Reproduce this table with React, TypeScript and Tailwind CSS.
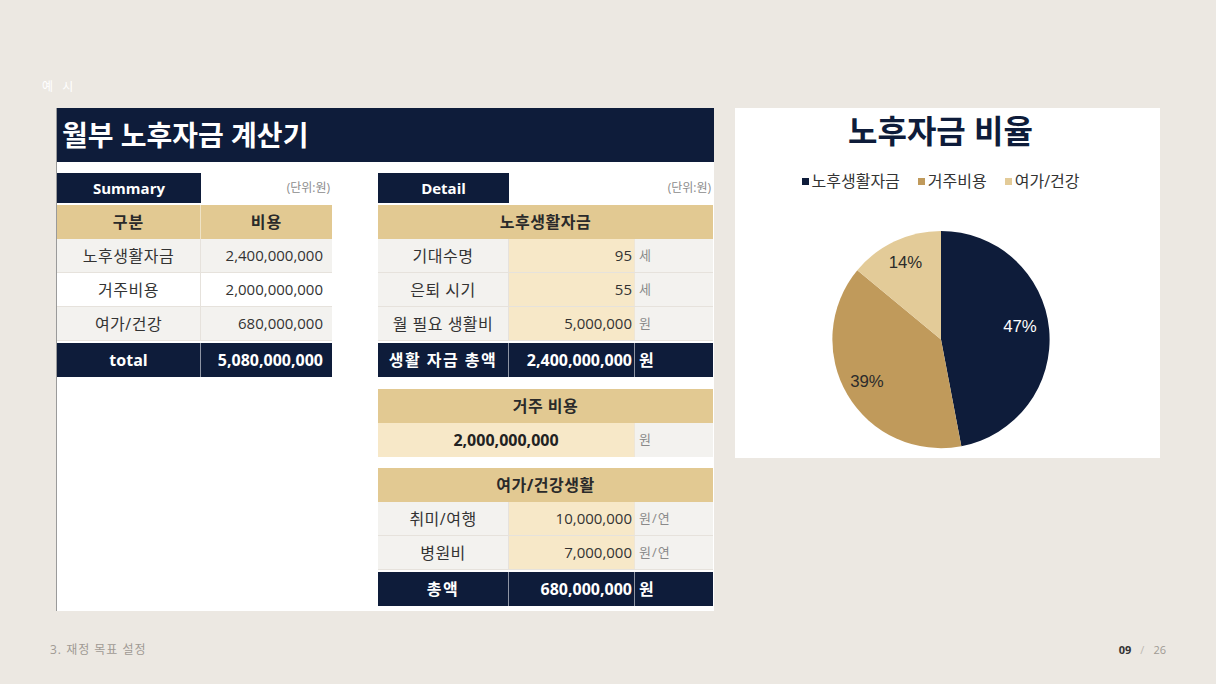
import React from "react"

const FONT = "font-['Open_Sans','Noto_Sans_CJK_KR',sans-serif]"

const summaryRows = [
  { label: "노후생활자금", value: "2,400,000,000", bg: "bg-[#f3f2ef]" },
  { label: "거주비용", value: "2,000,000,000", bg: "bg-white" },
  { label: "여가/건강", value: "680,000,000", bg: "bg-[#f3f2ef]" },
]

const lifeRows = [
  { label: "기대수명", value: "95", unit: "세" },
  { label: "은퇴 시기", value: "55", unit: "세" },
  { label: "월 필요 생활비", value: "5,000,000", unit: "원" },
]

const leisureRows = [
  { label: "취미/여행", value: "10,000,000", unit: "원/연" },
  { label: "병원비", value: "7,000,000", unit: "원/연" },
]

function TableTab({ label, width }: { label: string; width: string }) {
  return (
    <div className="flex h-[30px]">
      <div className={`${width} bg-[#0e1c3a] text-white font-bold text-[15px] flex items-center justify-center`}>
        {label}
      </div>
      <div className="flex-1 flex items-center justify-end pr-[2px] text-[12px] text-[#8c8c8c]">(단위:원)</div>
    </div>
  )
}

function TanHeader({ children, className = "" }: { children: React.ReactNode; className?: string }) {
  return (
    <div className={`h-[34px] bg-[#e2c992] flex items-center justify-center font-bold text-[16px] tracking-[0.5px] text-[#2a2a2a] ${className}`}>
      {children}
    </div>
  )
}

function DetailRow({ label, value, unit }: { label: string; value: string; unit: string }) {
  return (
    <div className="flex h-[34px] border-b border-[#e6e2dc] text-[15px] text-[#333]">
      <div className="w-[131px] bg-[#f3f2ef] border-r border-[#e6e2dc] flex items-center justify-center text-[16px] tracking-[0.5px]">{label}</div>
      <div className="w-[126px] bg-[#f7e8c8] border-r border-[#efe6d6] flex items-center justify-end pr-[2px]">{value}</div>
      <div className="flex-1 bg-[#f3f2ef] flex items-center pl-[4px] text-[13px] tracking-[1px] text-[#8a8a8a]">{unit}</div>
    </div>
  )
}

function NavyRow({ label, value }: { label: string; value: string }) {
  return (
    <div className="mt-[2px] flex h-[34px] bg-[#0e1c3a] text-white font-bold text-[16px]">
      <div className="w-[131px] border-r border-[#8e95a4] flex items-center justify-center tracking-[1.5px]">{label}</div>
      <div className="w-[126px] border-r border-[#8e95a4] flex items-center justify-end pr-[2px]">{value}</div>
      <div className="flex-1 flex items-center pl-[4px]">원</div>
    </div>
  )
}

function PieChart() {
  return (
    <svg width="240" height="240" viewBox="0 0 240 240" className="mt-[30px]">
      <path d="M120,120 L120,10 A110,110 0 0 1 140.61,228.05 Z" fill="#0e1c3a" />
      <path d="M120,120 L140.61,228.05 A110,110 0 0 1 35.24,49.88 Z" fill="#c09a5b" />
      <path d="M120,120 L35.24,49.88 A110,110 0 0 1 120,10 Z" fill="#e3cb98" />
      <g fontFamily="'Liberation Sans', Arial, sans-serif" fontSize="17" textAnchor="middle" dominantBaseline="central">
        <text x="200" y="107" fill="#ffffff">47%</text>
        <text x="45" y="163" fill="#2b2b2b">39%</text>
        <text x="84" y="42" fill="#2b2b2b">14%</text>
      </g>
    </svg>
  )
}

export default function App() {
  return (
    <div className={`w-[1216px] h-[684px] bg-[#ece8e2] flex flex-col ${FONT}`}>
      <div className="pt-[80px] pl-[42px] h-[94px] text-[12px] leading-[14px] tracking-[3px] text-white">예 시</div>

      <div className="mt-[14px] flex pl-[56px] gap-[21px]">
        {/* calculator panel */}
        <div className="w-[658px] h-[503px] bg-white border-l border-[#9a9a9a] flex flex-col">
          <div className="h-[54px] bg-[#0e1c3a] flex items-center pl-[5px] text-white font-bold text-[28px]">
            월부 노후자금 계산기
          </div>

          <div className="pt-[11px] flex gap-[46px]">
            {/* Summary */}
            <div className="w-[275px] flex flex-col">
              <TableTab label="Summary" width="w-[144px]" />
              <div className="mt-[2px] flex h-[34px] bg-[#e2c992] font-bold text-[16px] tracking-[1px] text-[#2a2a2a]">
                <div className="w-[144px] border-r border-[#efe3c6] flex items-center justify-center">구분</div>
                <div className="flex-1 flex items-center justify-center">비용</div>
              </div>
              {summaryRows.map((r) => (
                <div key={r.label} className={`flex h-[34px] border-b border-[#e6e2dc] text-[15px] text-[#333] ${r.bg}`}>
                  <div className="w-[144px] border-r border-[#e6e2dc] flex items-center justify-center text-[16px] tracking-[0.5px]">{r.label}</div>
                  <div className="flex-1 flex items-center justify-end pr-[9px]">{r.value}</div>
                </div>
              ))}
              <div className="mt-[2px] flex h-[34px] bg-[#0e1c3a] text-white font-bold text-[16px]">
                <div className="w-[144px] border-r border-[#8e95a4] flex items-center justify-center">total</div>
                <div className="flex-1 flex items-center justify-end pr-[9px]">5,080,000,000</div>
              </div>
            </div>

            {/* Detail */}
            <div className="w-[335px] flex flex-col">
              <TableTab label="Detail" width="w-[131px]" />
              <TanHeader className="mt-[2px]">노후생활자금</TanHeader>
              {lifeRows.map((r) => (
                <DetailRow key={r.label} {...r} />
              ))}
              <NavyRow label="생활 자금 총액" value="2,400,000,000" />

              <TanHeader className="mt-[12px]">거주 비용</TanHeader>
              <div className="flex h-[34px] text-[16px]">
                <div className="w-[257px] bg-[#f7e8c8] border-r border-[#efe6d6] flex items-center justify-center font-bold text-[#222]">
                  2,000,000,000
                </div>
                <div className="flex-1 bg-[#f3f2ef] flex items-center pl-[4px] text-[13px] text-[#8a8a8a]">원</div>
              </div>

              <TanHeader className="mt-[11px]">여가/건강생활</TanHeader>
              {leisureRows.map((r) => (
                <DetailRow key={r.label} {...r} />
              ))}
              <NavyRow label="총액" value="680,000,000" />
            </div>
          </div>
        </div>

        {/* chart panel */}
        <div className="w-[425px] h-[350px] bg-white pr-[14px] flex flex-col items-center">
          <div className="pt-[3px] h-[43px] leading-[40px] text-[32px] font-bold text-[#0e1c3a]">노후자금 비율</div>
          <div className="mt-[20px] h-[20px] flex items-center gap-[18px] text-[16px] text-[#333]">
            <div className="flex items-center gap-[3px]">
              <span className="w-[7px] h-[7px] bg-[#0e1c3a]" />
              노후생활자금
            </div>
            <div className="flex items-center gap-[3px]">
              <span className="w-[7px] h-[7px] bg-[#c09a5b]" />
              거주비용
            </div>
            <div className="flex items-center gap-[3px]">
              <span className="w-[7px] h-[7px] bg-[#e3cb98]" />
              여가/건강
            </div>
          </div>
          <PieChart />
        </div>
      </div>

      <div className="mt-[32px] flex justify-between pl-[50px] pr-[50px] text-[11px] leading-[14px]">
        <span className="text-[#a09a94] text-[12px] tracking-[1px]">3. 재정 목표 설정</span>
        <span className="flex gap-[9px]">
          <span className="font-bold text-[#333]">09</span>
          <span className="text-[#bdb8b2]">/</span>
          <span className="text-[#a09a94]">26</span>
        </span>
      </div>
    </div>
  )
}
